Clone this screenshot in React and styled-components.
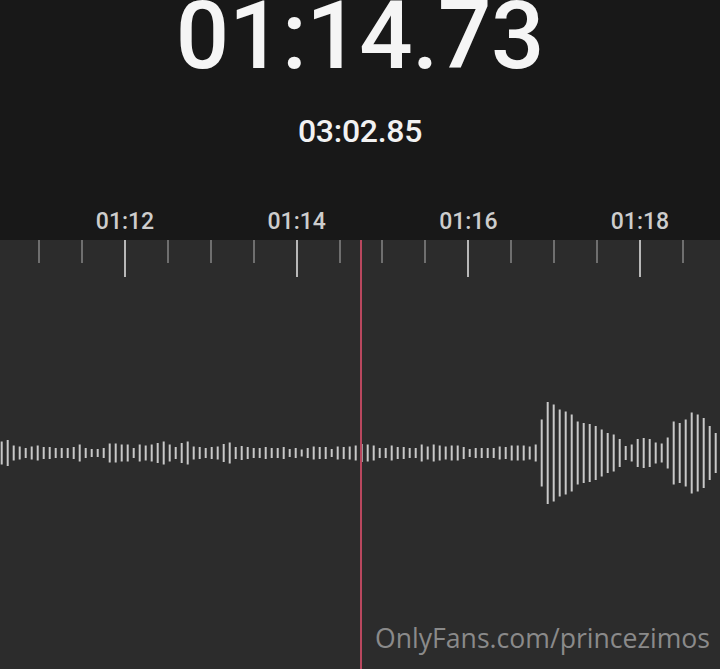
import React from "react";
import styled, { createGlobalStyle } from "styled-components";

const GlobalStyle = createGlobalStyle`
  html, body {
    margin: 0;
    padding: 0;
    background: #2c2c2c;
  }
  body {
    width: 720px;
    height: 669px;
    overflow: hidden;
    font-family: Roboto, "Liberation Sans", sans-serif;
  }
`;

const Screen = styled.div`
  width: 720px;
  height: 669px;
  display: flex;
  flex-direction: column;
  overflow: hidden;
`;

const Header = styled.header`
  height: 240px;
  background: #181818;
  display: flex;
  flex-direction: column;
  align-items: center;
  overflow: hidden;
`;

const ElapsedTime = styled.div`
  margin-top: -11px;
  font-size: 94px;
  line-height: 1;
  font-weight: 500;
  color: #f5f5f5;
  letter-spacing: -0.4px;
`;

const TotalTime = styled.div`
  margin-top: 32px;
  font-size: 32px;
  line-height: 1;
  font-weight: 500;
  color: #f2f2f2;
  letter-spacing: -0.3px;
`;

const LabelRow = styled.div`
  align-self: stretch;
  display: flex;
  margin-top: 63px;
  padding-left: 39.2px;
`;

const RulerLabel = styled.span`
  flex: 0 0 171.67px;
  text-align: center;
  font-size: 23px;
  line-height: 1;
  font-weight: 500;
  color: #cdcdcd;
`;

const Panel = styled.main`
  position: relative;
  flex: 1;
  background: #2c2c2c;
  display: flex;
  flex-direction: column;
`;

const TickRow = styled.div`
  display: flex;
  height: 37px;
  padding-left: 38.2px;
`;

const TickCell = styled.div`
  flex: 0 0 42.92px;
  display: flex;
  align-items: flex-start;
`;

const Tick = styled.div`
  width: 2px;
  height: ${(p) => (p.$major ? "37px" : "23px")};
  background: ${(p) => (p.$major ? "#b8b8b8" : "#6f6f6f")};
`;

const Wave = styled.svg`
  display: block;
  margin-top: 116px;
  width: 720px;
  height: 120px;
`;

const Watermark = styled.div`
  margin-top: auto;
  margin-bottom: 17px;
  padding-right: 10px;
  align-self: flex-end;
  font-family: "Open Sans", "Noto Sans", sans-serif;
  font-size: 26.6px;
  line-height: 1;
  color: #8a8a8a;
`;

const Playhead = styled.div`
  position: absolute;
  top: 0;
  bottom: 0;
  left: 360px;
  width: 2px;
  background: #b9475e;
`;

const labels = ["01:12", "01:14", "01:16", "01:18"];

const bars = [
  23, 26, 15, 13, 10, 13, 15, 12, 12, 10, 10, 10, 12, 17, 10, 8, 8, 10, 19, 19,
  17, 17, 10, 17, 15, 17, 20, 23, 17, 12, 20, 23, 13, 12, 10, 12, 13, 18, 21, 12,
  14, 12, 10, 10, 12, 10, 10, 12, 8, 10, 7, 10, 13, 12, 12, 8, 13, 12, 13, 15,
  18, 17, 15, 10, 10, 15, 12, 12, 10, 10, 17, 13, 17, 15, 13, 15, 15, 12, 8, 10,
  10, 10, 10, 13, 12, 15, 15, 15, 13, 17, 67, 102, 97, 87, 83, 77, 63, 60, 58, 54,
  47, 40, 37, 28, 14, 17, 28, 30, 28, 21, 19, 31, 63, 60, 67, 81, 77, 70, 54, 40,
];

export default function App() {
  const ticks = Array.from({ length: 16 }, (_, i) => i);
  return (
    <>
      <GlobalStyle />
      <Screen>
        <Header>
          <ElapsedTime>01:14.73</ElapsedTime>
          <TotalTime>03:02.85</TotalTime>
          <LabelRow>
            {labels.map((l) => (
              <RulerLabel key={l}>{l}</RulerLabel>
            ))}
          </LabelRow>
        </Header>
        <Panel>
          <TickRow>
            {ticks.map((i) => (
              <TickCell key={i}>
                <Tick $major={(i - 2) % 4 === 0} />
              </TickCell>
            ))}
          </TickRow>
          <Wave viewBox="0 0 720 120">
            {bars.map((h, k) => (
              <rect
                key={k}
                x={0.7 + 6 * k}
                y={60 - h / 2}
                width="2"
                height={h}
                fill="#c8c8c8"
              />
            ))}
          </Wave>
          <Watermark>OnlyFans.com/princezimos</Watermark>
          <Playhead />
        </Panel>
      </Screen>
    </>
  );
}
